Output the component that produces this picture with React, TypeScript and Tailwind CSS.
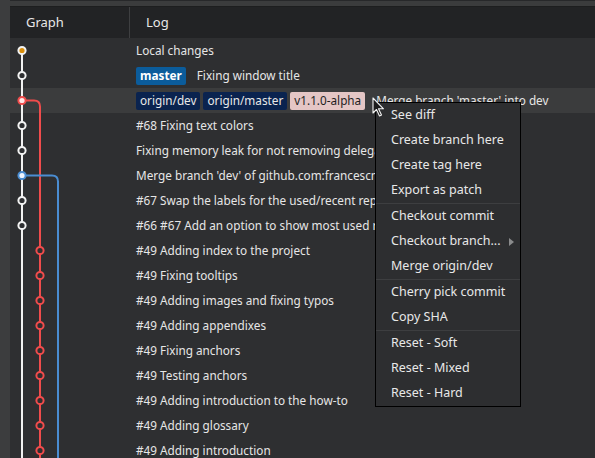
import React from 'react';

type Node = 'orange' | 'white' | 'red' | 'blue' | 'redSmall' | null;

interface Commit {
  text: string;
  node: Node;
  labels?: { name: string; kind: 'local' | 'remote' | 'tag' }[];
}

const COMMITS: Commit[] = [
  { text: 'Local changes', node: 'orange' },
  { text: 'Fixing window title', node: 'white', labels: [{ name: 'master', kind: 'local' }] },
  {
    text: "Merge branch 'master' into dev",
    node: 'red',
    labels: [
      { name: 'origin/dev', kind: 'remote' },
      { name: 'origin/master', kind: 'remote' },
      { name: 'v1.1.0-alpha', kind: 'tag' },
    ],
  },
  { text: '#68 Fixing text colors', node: 'white' },
  { text: 'Fixing memory leak for not removing delegates on dispose', node: 'white' },
  { text: "Merge branch 'dev' of github.com:francescmm/GitQlient into dev", node: 'blue' },
  { text: '#67 Swap the labels for the used/recent repositories', node: 'white' },
  { text: '#66 #67 Add an option to show most used repositories', node: 'white' },
  { text: '#49 Adding index to the project', node: 'redSmall' },
  { text: '#49 Fixing tooltips', node: 'redSmall' },
  { text: '#49 Adding images and fixing typos', node: 'redSmall' },
  { text: '#49 Adding appendixes', node: 'redSmall' },
  { text: '#49 Fixing anchors', node: 'redSmall' },
  { text: '#49 Testing anchors', node: 'redSmall' },
  { text: '#49 Adding introduction to the how-to', node: 'redSmall' },
  { text: '#49 Adding glossary', node: 'redSmall' },
  { text: '#49 Adding introduction', node: 'redSmall' },
];

const RED = '#f04c4c';
const BLUE = '#4a8dd2';
const BG = '#2e2f31';

const MENU: (string | null)[] = [
  'See diff',
  'Create branch here',
  'Create tag here',
  'Export as patch',
  null,
  'Checkout commit',
  'Checkout branch...',
  'Merge origin/dev',
  null,
  'Cherry pick commit',
  'Copy SHA',
  null,
  'Reset - Soft',
  'Reset - Mixed',
  'Reset - Hard',
];

const GraphCell: React.FC<{ index: number; node: Node; selected: boolean }> = ({ index, node, selected }) => {
  const fill = selected ? '#3b3c3d' : BG;
  return (
    <svg width="120" height="25" className="shrink-0 block">
      {/* main white lane */}
      <line x1="12" y1={index === 0 ? 12.5 : 0} x2="12" y2="25" stroke="#f2f2f2" strokeWidth="2" />
      {/* red lane */}
      {index === 2 && <path d="M12 12.5 H24 Q30 12.5 30 18.5 V25" fill="none" stroke={RED} strokeWidth="2" />}
      {index > 2 && <line x1="30" y1="0" x2="30" y2="25" stroke={RED} strokeWidth="2" />}
      {/* blue lane */}
      {index === 5 && <path d="M12 12.5 H42 Q48 12.5 48 18.5 V25" fill="none" stroke={BLUE} strokeWidth="2" />}
      {index > 5 && <line x1="48" y1="0" x2="48" y2="25" stroke={BLUE} strokeWidth="2" />}
      {node === 'orange' && <circle cx="12" cy="12.5" r="3.6" fill="#d98e0b" stroke="#f2f2f2" strokeWidth="2" />}
      {node === 'white' && <circle cx="12" cy="12.5" r="3.6" fill={fill} stroke="#f2f2f2" strokeWidth="2" />}
      {node === 'red' && <circle cx="12" cy="12.5" r="3.6" fill="#ffe6e6" stroke={RED} strokeWidth="2" />}
      {node === 'blue' && <circle cx="12" cy="12.5" r="3.6" fill="#eef5ff" stroke={BLUE} strokeWidth="2" />}
      {node === 'redSmall' && <circle cx="30" cy="12.5" r="3.6" fill={fill} stroke={RED} strokeWidth="2" />}
    </svg>
  );
};

const Label: React.FC<{ name: string; kind: 'local' | 'remote' | 'tag' }> = ({ name, kind }) => {
  const cls =
    kind === 'local'
      ? 'bg-[#0b5c9b] text-white font-bold'
      : kind === 'remote'
        ? 'bg-[#0a234f] text-[#e8e8e8]'
        : 'bg-[#e4c6c5] text-[#1e1e1e]';
  return <span className={`h-[18px] px-[4px] rounded-[2px] flex items-center ${cls}`}>{name}</span>;
};

const Cursor: React.FC = () => (
  <svg width="14" height="20" viewBox="0 0 14 20" className="absolute left-[372px] top-[97px]">
    <path d="M1 1 V16 L4.5 12.5 L7.5 19 L9.5 18 L6.5 11.8 H11.5 Z" fill="#1c1c1c" stroke="#f4f4f4" strokeWidth="1.1" strokeLinejoin="round" />
  </svg>
);

export default function App() {
  return (
    <div
      className="relative w-[595px] h-[458px] overflow-hidden flex bg-[#2e2f31] text-[11.75px] text-[#e6e6e6]"
      style={{ fontFamily: '"Noto Sans", "Open Sans", sans-serif' }}
    >
      <div className="w-[10px] shrink-0 bg-[#3c3d3e]" />
      <div className="flex-1 flex flex-col min-w-0">
        <div className="h-[7px] shrink-0 bg-[#3b3c3d] border-t border-[#27282a] border-b border-b-[#1d1e1f]" />
        <div className="h-[31px] shrink-0 flex bg-[#222325] text-[13px] text-[#e8e8e8]">
          <div className="w-[120px] border-r border-[#3e3f41] flex items-center pl-[16px]">Graph</div>
          <div className="flex items-center pl-[16px]">Log</div>
        </div>
        <div className="flex flex-col">
          {COMMITS.map((c, i) => (
            <div key={i} className={`h-[25px] flex items-center shrink-0 ${i === 2 ? 'bg-[#3b3c3d]' : ''}`}>
              <GraphCell index={i} node={c.node} selected={i === 2} />
              <div className="flex items-center gap-[3px] pl-[6px] whitespace-nowrap">
                {c.labels?.map((l) => <Label key={l.name} name={l.name} kind={l.kind} />)}
                <span className={c.labels ? 'ml-[8px]' : ''}>{c.text}</span>
              </div>
            </div>
          ))}
        </div>
      </div>

      <div className="absolute left-[375px] top-[102px] w-[146px] bg-[#2d2e30] border border-black flex flex-col text-[12.5px] text-[#e8e8e8]">
        {MENU.map((m, i) =>
          m === null ? (
            <div key={i} className="h-px bg-[#3d3e40]" />
          ) : (
            <div key={i} className="h-[25px] flex items-center justify-between pl-[15px] pr-[6px]">
              <span>{m}</span>
              {m === 'Checkout branch...' && (
                <svg width="5" height="8" viewBox="0 0 5 8">
                  <path d="M0 0 L5 4 L0 8 Z" fill="#8a8b8c" />
                </svg>
              )}
            </div>
          )
        )}
      </div>
      <Cursor />
    </div>
  );
}
